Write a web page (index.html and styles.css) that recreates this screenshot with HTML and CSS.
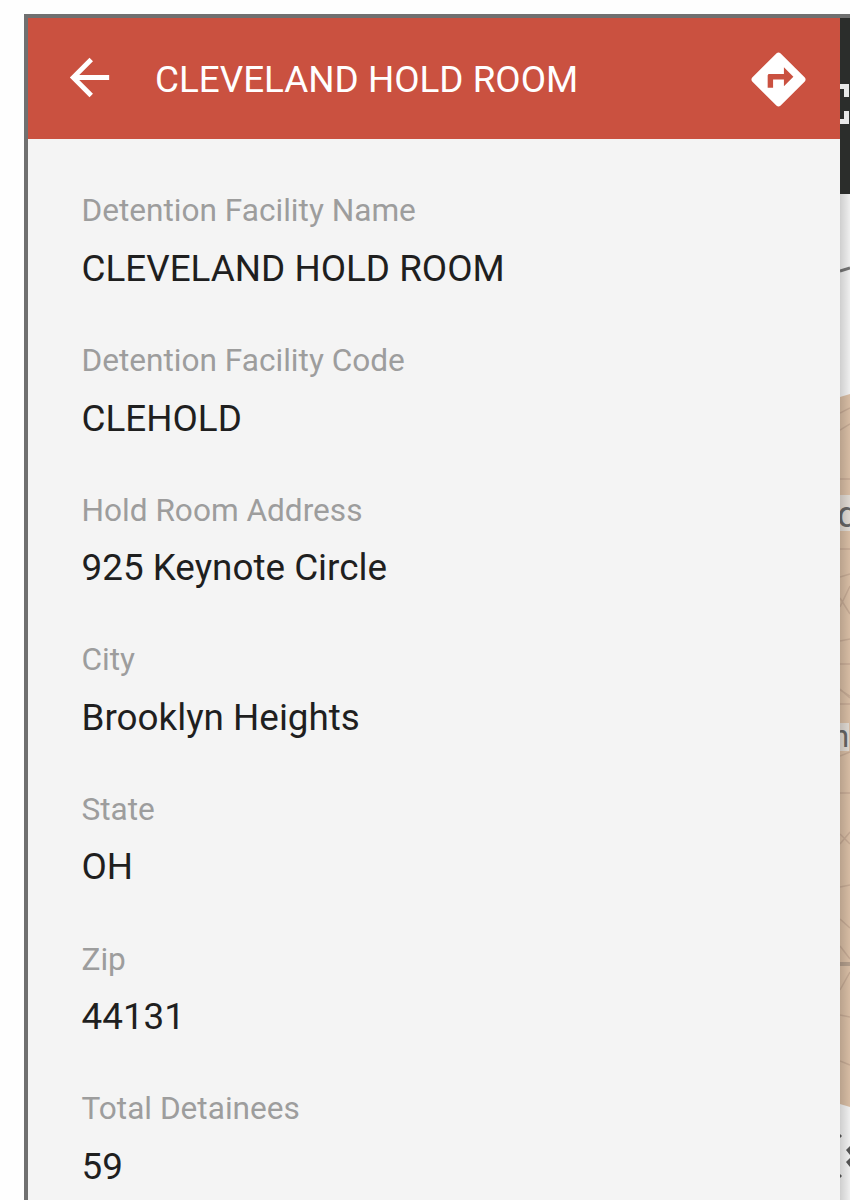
FILE: index.html
```html
<!DOCTYPE html>
<html lang="en">
<head>
<meta charset="utf-8">
<title>Cleveland Hold Room</title>
<link rel="stylesheet" href="styles.css">
</head>
<body>
<div class="frame">
  <main class="panel">
    <header class="bar">
      <svg class="back" viewBox="0 0 24 24"><path d="M20 11H7.83l5.59-5.59L12 4l-8 8 8 8 1.41-1.41L7.83 13H20v-2z"/></svg>
      <h1 class="title">CLEVELAND HOLD ROOM</h1>
      <svg class="directions" viewBox="0 0 24 24"><path d="M21.71 11.29l-9-9c-.39-.39-1.02-.39-1.41 0l-9 9c-.39.39-.39 1.02 0 1.41l9 9c.39.39 1.02.39 1.41 0l9-9c.39-.38.39-1.01 0-1.41zM14 14.5V12h-4v3H8v-4.4c0-.35.25-.6.6-.6H14V7.5l3.5 3.5-3.5 3.5z"/></svg>
    </header>
    <dl class="fields">
      <div class="field"><dt>Detention Facility Name</dt><dd>CLEVELAND HOLD ROOM</dd></div>
      <div class="field"><dt>Detention Facility Code</dt><dd>CLEHOLD</dd></div>
      <div class="field"><dt>Hold Room Address</dt><dd>925 Keynote Circle</dd></div>
      <div class="field"><dt>City</dt><dd>Brooklyn Heights</dd></div>
      <div class="field"><dt>State</dt><dd>OH</dd></div>
      <div class="field"><dt>Zip</dt><dd>44131</dd></div>
      <div class="field"><dt>Total Detainees</dt><dd>59</dd></div>
    </dl>
  </main>
  <aside class="map">
    <div class="map-bar">
      <svg class="expand" viewBox="0 0 10 40"><path d="M0 2.5H6.5V13M0 37.5H6.5V27"/></svg>
    </div>
    <div class="map-body">
      <svg class="terrain" viewBox="0 0 10 1006">
        <path class="coast" d="M0 77L10 74"/>
        <path class="land" d="M0 203L10 200V913L0 910Z"/>
        <path class="road" d="M0 219L10 214M0 236L10 230M0 285H10M0 355H10M0 383L10 380M0 404L10 420M0 413L10 392M0 447L10 445M0 470H10M0 495L10 504M0 496L10 502M0 510H10M0 562L10 558M0 599H10M0 640L10 650M0 650L10 638M0 693L10 691M0 725L10 734M0 752L10 765M0 796L10 778M0 821L10 823M0 867L10 871"/>
        <path class="highway" d="M0 770H10"/>
        <path class="mark" d="M0 940l2 2-2 2zM0 980l2 2-2 2zM10 952l-4 4 4 5zM10 964l-4 4 4 5z"/>
      </svg>
      <span class="place place-d">d</span>
      <span class="place place-n">n</span>
    </div>
  </aside>
</div>
</body>
</html>
```
FILE: styles.css
```css
* { box-sizing: border-box; }

body {
  margin: 0;
  height: 1200px;
  padding: 14px 0 0 24px;
  overflow: hidden;
  background: #fefefe;
  font-family: Roboto, "Liberation Sans", sans-serif;
}

.frame {
  display: flex;
  height: 1186px;
  border-top: 4px solid #707070;
  border-left: 4px solid #707070;
}

.panel {
  flex: 0 0 812px;
  background: #f4f4f4;
}

.bar {
  display: flex;
  align-items: center;
  height: 121px;
  padding: 0 29px 0 32px;
  background: #ca5140;
  color: #fff;
}

.bar svg { fill: #fff; flex: none; }
.back { width: 59px; height: 59px; margin-bottom: 3px; }
.directions { width: 65px; height: 65px; margin: 1px 0 0 auto; }

.title {
  margin: 3px 0 0 36px;
  font-size: 36.85px;
  font-weight: 400;
  line-height: 56px;
  white-space: nowrap;
}

.fields {
  display: flex;
  flex-direction: column;
  gap: 43.65px;
  margin: 0;
  padding: 51.3px 0 0 53.5px;
}

.field { height: 106px; flex: none; }

dt {
  font-size: 31.6px;
  line-height: 42px;
  color: #9d9d9d;
}

dd {
  margin: 8.6px 0 0;
  font-size: 36.85px;
  line-height: 56px;
  color: #1f1f1f;
}

.map {
  flex: 1;
  display: flex;
  flex-direction: column;
  overflow: hidden;
}

.map-bar {
  height: 176px;
  padding-top: 66px;
  background: #2b2d2b;
}

.expand {
  display: block;
  width: 10px;
  height: 40px;
  fill: none;
  stroke: #e8e8e8;
  stroke-width: 5;
}

.map-body {
  position: relative;
  flex: 1;
  background: #f3f3f3;
}

.map-body::after {
  content: "";
  position: absolute;
  inset: 0;
  background: linear-gradient(90deg, rgba(0, 0, 0, .15), rgba(0, 0, 0, .02));
}

.terrain { display: block; width: 10px; height: 1006px; fill: none; }
.coast { stroke: #777; stroke-width: 3; }
.land { fill: #dabfa6; }
.road { stroke: #c6ab95; stroke-width: 1.5; }
.highway { stroke: #b49f8d; stroke-width: 4; }
.mark { fill: #555; }

.place {
  position: absolute;
  width: 10px;
  height: 30px;
  overflow: hidden;
  background: #e2dcd5;
  color: #666;
  font-size: 37px;
  line-height: 40px;
  text-indent: -3px;
}

.place-d { left: 0; top: 301px; height: 36px; }
.place-n { left: 0; top: 529px; width: 9px; height: 28px; font-size: 31px; line-height: 28px; text-indent: -8px; }
```
